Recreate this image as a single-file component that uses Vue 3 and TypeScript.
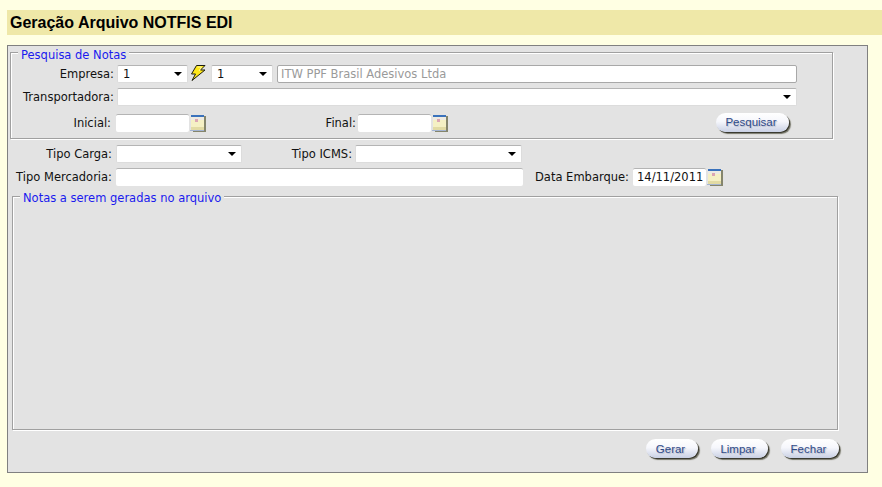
<script setup lang="ts">
const calIconRows = [0]
void calIconRows
</script>

<template>
  <div class="page">
    <h1 class="title">Geração Arquivo NOTFIS EDI</h1>
    <div class="panel">
      <section class="box box-search">
        <span class="legend">Pesquisa de Notas</span>
        <div class="row r1">
          <label class="l-empresa">Empresa:</label>
          <div class="sel s-emp"><span>1</span><i class="arrow"></i></div>
          <svg class="bolt" width="16" height="16" viewBox="0 0 16 16">
            <path d="M6.500 .5h8.500L10.500 5H15L2 15.500 5.500 9H1.500z" fill="#ffe81a" stroke="#1c1c10" stroke-width="1" stroke-linejoin="miter"/>
            <path d="M7.500 2h4L9 6" fill="none" stroke="#fff9a0" stroke-width="1"/>
          </svg>
          <div class="sel s-fil"><span>1</span><i class="arrow"></i></div>
          <div class="ro">ITW PPF Brasil Adesivos Ltda</div>
        </div>
        <div class="row r2">
          <label class="l-empresa">Transportadora:</label>
          <div class="sel s-transp"><span></span><i class="arrow"></i></div>
        </div>
        <div class="row r3">
          <label class="l-inicial">Inicial:</label>
          <div class="inp w73"></div>
          <svg class="cal" width="16" height="18" viewBox="0 0 16 18">
            <rect x="3" y="2" width="13" height="16" fill="#85856c"/>
            <rect x="1" y="1" width="13" height="15" fill="#f5f0c4"/>
            <rect x="1" y="1" width="13" height="2" fill="#3a72bc"/>
            <rect x="1" y="3" width="13" height="3" fill="#eeebe2"/>
            <rect x="5" y="5" width="3" height="3" fill="#dba6b4"/>
            <rect x="1" y="13" width="13" height="3" fill="#e2dba4"/>
            <rect x="0" y="16" width="14" height="1" fill="#a3b4d2"/>
          </svg>
          <label class="l-final">Final:</label>
          <div class="inp w73"></div>
          <svg class="cal" width="16" height="18" viewBox="0 0 16 18">
            <rect x="3" y="2" width="13" height="16" fill="#85856c"/>
            <rect x="1" y="1" width="13" height="15" fill="#f5f0c4"/>
            <rect x="1" y="1" width="13" height="2" fill="#3a72bc"/>
            <rect x="1" y="3" width="13" height="3" fill="#eeebe2"/>
            <rect x="5" y="5" width="3" height="3" fill="#dba6b4"/>
            <rect x="1" y="13" width="13" height="3" fill="#e2dba4"/>
            <rect x="0" y="16" width="14" height="1" fill="#a3b4d2"/>
          </svg>
          <button class="btn b-pesq">Pesquisar</button>
        </div>
      </section>

      <div class="row r4">
        <label class="l-tipo">Tipo Carga:</label>
        <div class="sel s-carga"><span></span><i class="arrow"></i></div>
        <label class="l-icms">Tipo ICMS:</label>
        <div class="sel s-icms"><span></span><i class="arrow"></i></div>
      </div>
      <div class="row r5">
        <label class="l-tipo">Tipo Mercadoria:</label>
        <div class="inp w407"></div>
        <label class="l-emb">Data Embarque:</label>
        <div class="inp w73 date">14/11/2011</div>
        <svg class="cal" width="16" height="18" viewBox="0 0 16 18">
          <rect x="3" y="2" width="13" height="16" fill="#85856c"/>
          <rect x="1" y="1" width="13" height="15" fill="#f5f0c4"/>
          <rect x="1" y="1" width="13" height="2" fill="#3a72bc"/>
          <rect x="1" y="3" width="13" height="3" fill="#eeebe2"/>
          <rect x="5" y="5" width="3" height="3" fill="#dba6b4"/>
          <rect x="1" y="13" width="13" height="3" fill="#e2dba4"/>
          <rect x="0" y="16" width="14" height="1" fill="#a3b4d2"/>
        </svg>
      </div>

      <section class="box box-notas">
        <span class="legend legend-notas">Notas a serem geradas no arquivo</span>
      </section>

      <div class="actions">
        <button class="btn b-gerar">Gerar</button>
        <button class="btn b-limpar">Limpar</button>
        <button class="btn b-fechar">Fechar</button>
      </div>
    </div>
  </div>
</template>

<style>
html, body { margin: 0; background: #ffffe3; }
</style>

<style scoped>
.page {
  height: 487px;
  padding-top: 10px;
  box-sizing: border-box;
  background: #ffffe3;
  overflow: hidden;
  font-family: "DejaVu Sans", Verdana, sans-serif;
  font-size: 11.5px;
  color: #111;
}
.title {
  margin: 0 0 0 7px;
  height: 25px;
  line-height: 25px;
  padding-left: 3px;
  background: #efe8a8;
  font-family: "Liberation Sans", Arial, sans-serif;
  font-size: 16px;
  font-weight: bold;
  color: #000;
}
.panel {
  margin: 10px 0 0 7px;
  width: 861px;
  height: 428px;
  box-sizing: border-box;
  background: #e3e3e3;
  border: 1px solid #808080;
  display: flex;
  flex-direction: column;
  align-items: flex-start;
}
.box {
  position: relative;
  box-sizing: border-box;
  border: 1px solid #a0a0a0;
  box-shadow: 1px 1px 0 #fff, inset 1px 1px 0 #fff;
}
.legend {
  position: absolute;
  left: 7px;
  top: -4px;
  padding: 0 3px;
  color: #1a1aee;
  line-height: 13px;
  background: #e3e3e3;
}
.legend-notas { left: 7px; top: -5px; }
.box-search {
  margin: 6px 0 0 2px;
  width: 823px;
  height: 87px;
}
.box-notas {
  margin: 10px 0 0 4px;
  width: 826px;
  height: 234px;
}
.row { display: flex; align-items: center; }
.row label { text-align: right; white-space: nowrap; box-sizing: border-box; }
.r1 { height: 18px; margin-top: 12px; }
.r2 { height: 18px; margin-top: 5px; }
.r3 { height: 18px; margin-top: 8px; }
.r4 { height: 18px; margin-top: 6px; }
.r5 { height: 18px; margin-top: 5px; }
.l-empresa { width: 103px; margin-right: 3px; }
.l-inicial { width: 100px; margin-right: 5px; }
.l-final { width: 150px; margin-right: 2px; }
.l-tipo { width: 104px; margin-right: 4px; }
.l-icms { width: 110px; margin-right: 3px; }
.l-emb { width: 106px; margin-right: 4px; }
.sel, .inp, .ro {
  height: 18px;
  box-sizing: border-box;
  background: #fff;
  border-radius: 2px;
  flex: none;
}
.sel {
  position: relative;
  padding-left: 5px;
  border: 1px solid #dcdcdc;
  border-top-color: #b4b4b4;
  line-height: 16px;
}
.arrow {
  position: absolute;
  right: 5px;
  top: 6px;
  width: 0;
  height: 0;
  border: 4px solid transparent;
  border-top: 4px solid #000;
  border-bottom: 0;
}
.s-emp { width: 71px; }
.s-fil { width: 62px; }
.s-transp { width: 680px; }
.s-carga { width: 126px; }
.s-icms { width: 167px; }
.bolt { margin: 0 5px 2px 2px; flex: none; }
.ro {
  width: 520px;
  margin: -1px 0 0 4px;
  border: 1px solid #a8a8a8;
  color: #9a9a9a;
  line-height: 16px;
  padding-left: 3px;
}
.inp {
  border-top: 1px solid #b4b4b4;
  line-height: 17px;
}
.w73 { width: 73px; }
.w407 { width: 407px; }
.date { padding-left: 4px; }
.cal { margin-left: 1px; flex: none; }
.btn {
  height: 19px;
  box-sizing: border-box;
  padding: 0 3px 0 0;
  border: 0;
  border-radius: 10px;
  background: linear-gradient(#ffffff 0%, #f6f7fc 45%, #c9d0e4 100%);
  box-shadow: 1px 1px 0 #3a3a30, 2px 2px 1px #77776a;
  font-family: "Liberation Sans", Arial, sans-serif;
  font-size: 11.5px;
  color: #2f4a88;
  text-shadow: 1px 1px 1px #b8bccb;
  flex: none;
}
.b-pesq { width: 73px; margin-left: 268px; margin-bottom: 2px; }
.actions {
  display: flex;
  margin: 9px 0 0 638px;
}
.b-gerar { width: 52px; }
.b-limpar { width: 57px; margin-left: 13px; }
.b-fechar { width: 58px; margin-left: 13px; }
</style>
